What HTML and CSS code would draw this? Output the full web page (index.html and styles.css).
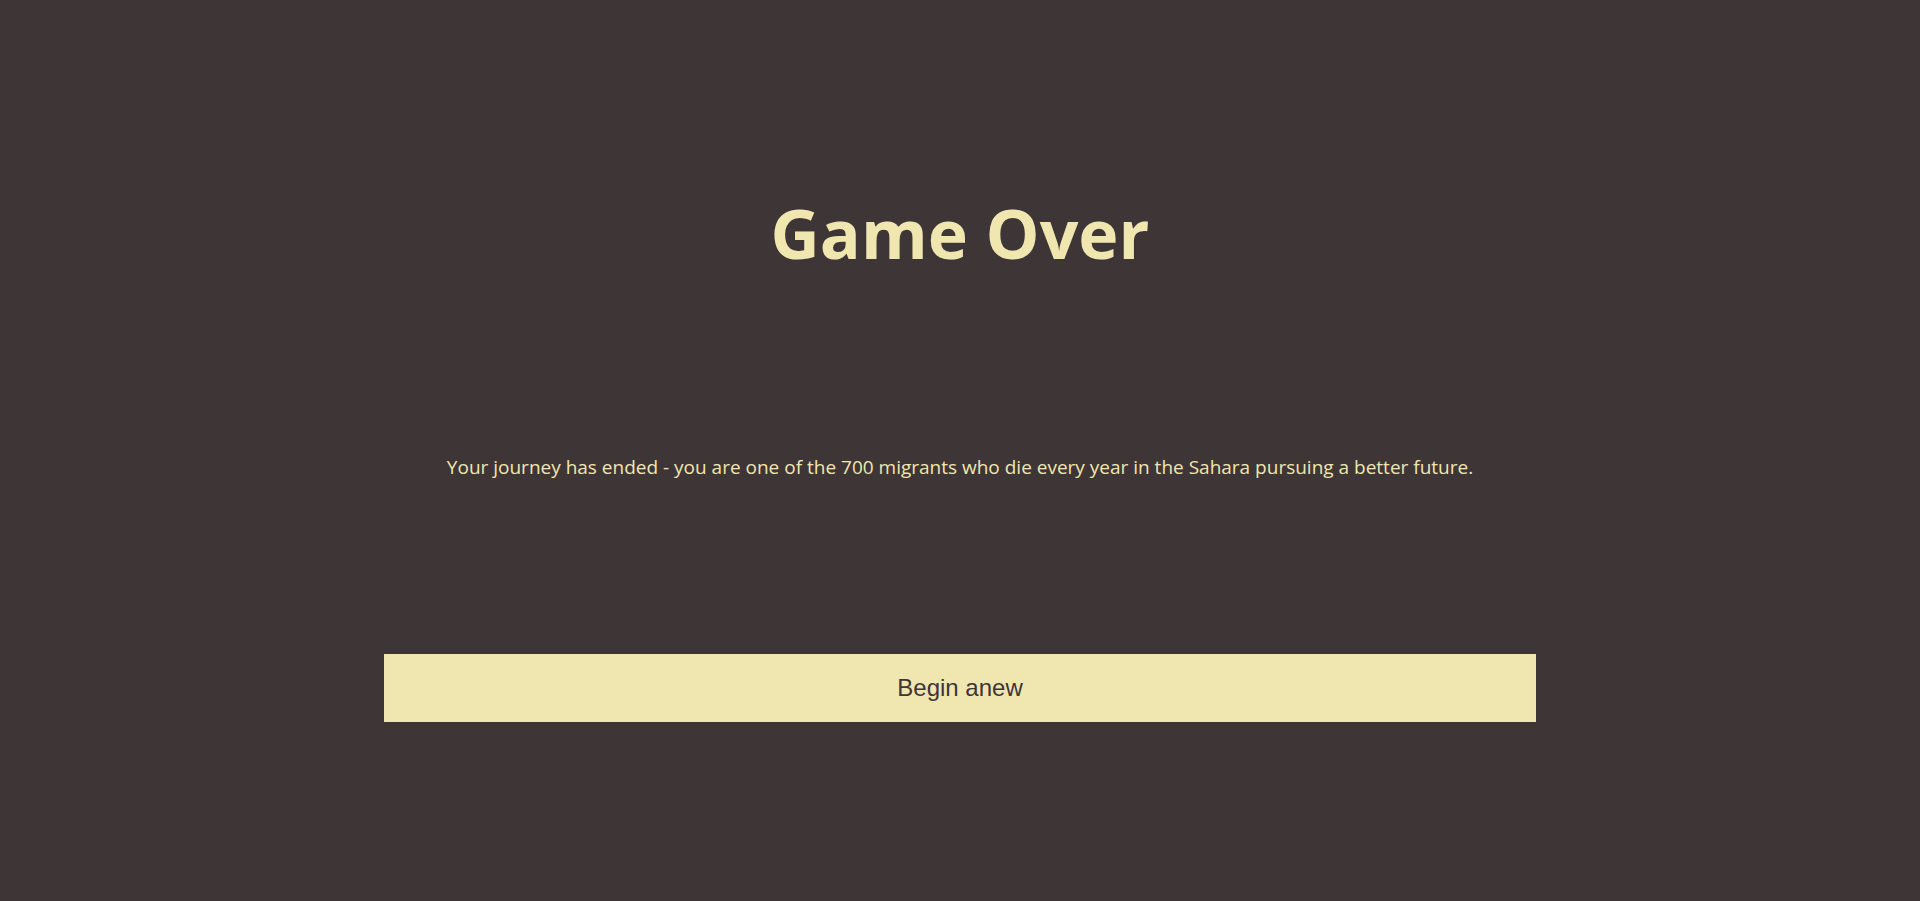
FILE: index.html
```html
<!DOCTYPE html>
<html>
<head>
<meta charset="utf-8">
<link rel="stylesheet" href="styles.css">
</head>
<body>
<main class="screen">
  <h1 class="title">Game Over</h1>
  <p class="message">Your journey has ended - you are one of the 700 migrants who die every year in the Sahara pursuing a better future.</p>
  <button class="restart">Begin anew</button>
</main>
</body>
</html>
```
FILE: styles.css
```css
html, body {
  margin: 0;
  padding: 0;
  height: 100%;
  background: #3e3537;
}
.screen {
  display: flex;
  flex-direction: column;
  align-items: center;
  font-family: "Open Sans", "Noto Sans", sans-serif;
  color: #f0e6b0;
}
.title {
  margin: 187px 0 0;
  font-size: 68px;
  font-weight: 700;
  line-height: 92px;
}
.message {
  margin: 174px 0 0;
  font-size: 19px;
  line-height: 28px;
}
.restart {
  margin-top: 173px;
  width: 1152px;
  height: 68px;
  border: none;
  background: #f0e6b0;
  color: #3e3537;
  font-family: "Liberation Sans", Arial, sans-serif;
  font-size: 24px;
}
```
